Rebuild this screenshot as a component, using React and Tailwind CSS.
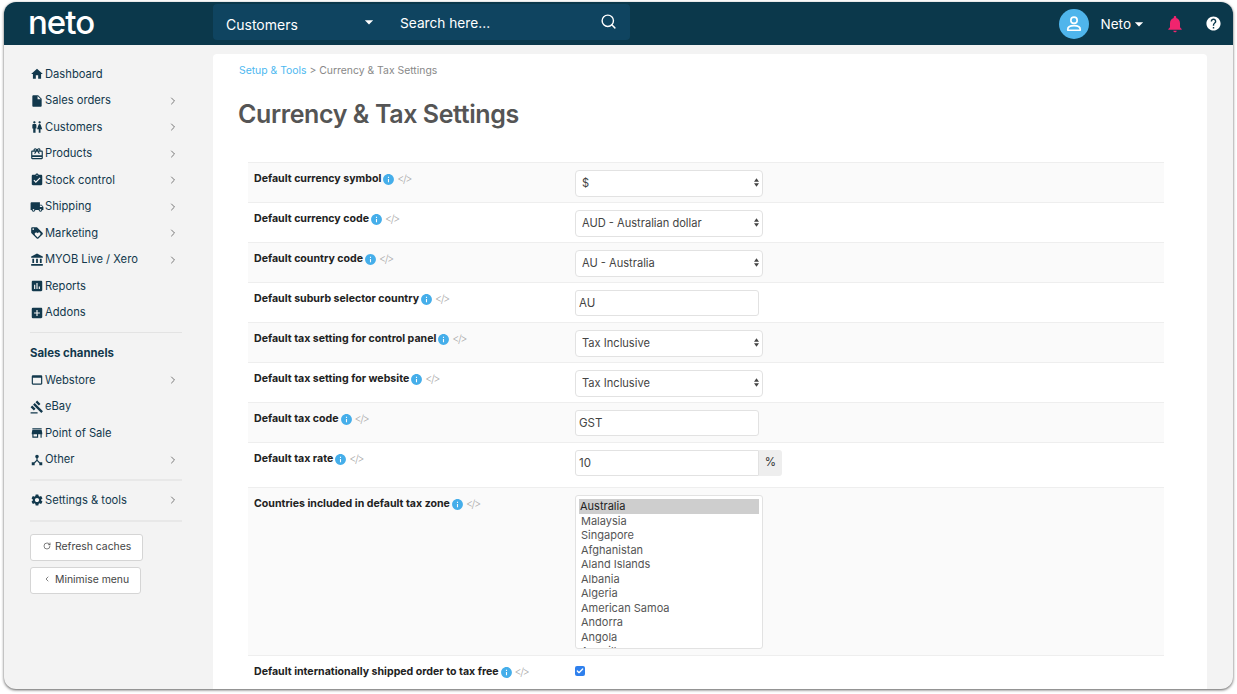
import {
  MdHome, MdInsertDriveFile, MdWc, MdCardGiftcard, MdAssignmentTurnedIn, MdLocalShipping,
  MdLoyalty, MdAccountBalance, MdAssessment, MdAddBox, MdWebAsset, MdGavel, MdStore,
  MdDeviceHub, MdSettings, MdNotifications, MdHelp, MdArrowDropDown, MdInfo,
} from "react-icons/md";
import { ChevronRight, ChevronLeft, RotateCw, Search, Check } from "lucide-react";

const mainMenu = [
  { label: "Dashboard", icon: MdHome },
  { label: "Sales orders", icon: MdInsertDriveFile, more: true },
  { label: "Customers", icon: MdWc, more: true },
  { label: "Products", icon: MdCardGiftcard, more: true },
  { label: "Stock control", icon: MdAssignmentTurnedIn, more: true },
  { label: "Shipping", icon: MdLocalShipping, more: true },
  { label: "Marketing", icon: MdLoyalty, more: true },
  { label: "MYOB Live / Xero", icon: MdAccountBalance, more: true },
  { label: "Reports", icon: MdAssessment },
  { label: "Addons", icon: MdAddBox },
];

const channels = [
  { label: "Webstore", icon: MdWebAsset, more: true },
  { label: "eBay", icon: MdGavel },
  { label: "Point of Sale", icon: MdStore },
  { label: "Other", icon: MdDeviceHub, more: true },
];

const countries = [
  "Malaysia", "Singapore", "Afghanistan", "Aland Islands", "Albania", "Algeria",
  "American Samoa", "Andorra", "Angola", "Anguilla",
];

function NavItem({ item }) {
  const Icon = item.icon;
  return (
    <div className="flex h-[26.5px] items-center text-[#12384c]">
      <Icon className="w-[14px] h-[14px] -ml-[0.5px] mr-[1.5px] shrink-0" />
      <span className="text-[11.2px]">{item.label}</span>
      {item.more && <ChevronRight className="ml-auto mr-[3px] w-[12px] h-[12px] text-[#777]" />}
    </div>
  );
}

function Label({ text }) {
  return (
    <div className="flex items-center text-[10.6px] font-bold text-[#222]">
      <span>{text}</span>
      <MdInfo className="ml-[1px] w-[13px] h-[13px] text-[#45aeea]" />
      <span className="ml-[2px] text-[11px] font-light tracking-[-1.5px] text-[#aaa]">&lt;/&gt;</span>
    </div>
  );
}

function Row({ text, shaded, className, children }) {
  return (
    <div className={`flex border-t border-[#eeeeee] ${shaded ? "bg-[#fafafa]" : "bg-white"} ${className}`}>
      <div className="w-[327px] pl-[6px] pt-[8px]">
        <Label text={text} />
      </div>
      <div className="pt-[6px]">{children}</div>
    </div>
  );
}

function SelectBox({ value }) {
  return (
    <div className="relative w-[188px] h-[27px]">
      <select
        defaultValue={value}
        className="appearance-none w-full h-full rounded-[4px] border border-[#e2e2e2] bg-white pl-[6px] text-[11.1px] text-[#444]"
      >
        <option>{value}</option>
      </select>
      <svg viewBox="0 0 6 10" className="absolute right-[4px] top-[9px] w-[5px] h-[9px] fill-[#444]">
        <path d="M3 0 6 4H0zM3 10 0 6h6z" />
      </svg>
    </div>
  );
}

function TextBox({ value }) {
  return (
    <input
      defaultValue={value}
      className="w-[184px] h-[26px] rounded-[3px] border border-[#e2e2e2] bg-white px-[3px] text-[11.5px] text-[#444]"
    />
  );
}

export default function App() {
  return (
    <div className="w-[1237px] h-[694px] overflow-hidden bg-white pl-[4px] pt-[2px] font-['Inter',sans-serif]">
      <div className="flex flex-col w-[1229px] h-[687px] overflow-hidden rounded-[12px] bg-[#f3f3f3] shadow-[0_1px_3px_rgba(0,0,0,0.65)]">
        <header className="flex items-center h-[43px] shrink-0 bg-[#0b384b] text-white">
          <div className="w-[209px] pl-[24px] text-[33px] font-medium leading-none tracking-[-1px] -mt-[3px]">neto</div>
          <div className="flex items-center w-[417px] h-[36px] -mt-[4px] rounded-[4px] bg-[#0f4460]">
            <span className="ml-[13px] w-[136px] mt-[5px] text-[14px]">Customers</span>
            <MdArrowDropDown className="w-[20px] h-[20px] -ml-[3px]" />
            <span className="ml-[21px] mt-[4px] text-[13.7px]">Search here...</span>
            <Search className="ml-auto mr-[13px] w-[17px] h-[17px]" />
          </div>
          <div className="ml-auto flex items-center">
            <div className="flex items-center justify-center w-[30px] h-[30px] rounded-full bg-[#4fb5ec]">
              <svg viewBox="0 0 24 24" className="w-[20px] h-[20px] fill-none stroke-white stroke-[2]">
                <circle cx="12" cy="7.5" r="3.8" />
                <path d="M4.5 19.5v-1c0-3 3.5-4.5 7.5-4.5s7.5 1.500 7.500 4.500v1z" strokeLinejoin="round" />
              </svg>
            </div>
            <span className="ml-[12px] mt-[1px] text-[13.5px]">Neto</span>
            <MdArrowDropDown className="w-[20px] h-[20px] -ml-[2px]" />
            <MdNotifications className="ml-[16px] w-[20px] h-[20px] text-[#f0246e]" />
            <MdHelp className="ml-[20px] mr-[11px] w-[17px] h-[17px]" />
          </div>
        </header>

        <div className="flex flex-1 min-h-0">
          <aside className="w-[209px] shrink-0 pl-[26px] pt-[16px]">
            <div className="w-[152px]">
              {mainMenu.map((item) => <NavItem key={item.label} item={item} />)}
              <div className="mt-[6px] border-t border-[#e3e3e3]" />
              <div className="mt-[12px] mb-[5px] text-[11.4px] font-bold text-[#12384c]">Sales channels</div>
              {channels.map((item) => <NavItem key={item.label} item={item} />)}
              <div className="mt-[6px] border-t-2 border-[#e8e8e8]" />
              <div className="my-[6px]">
                <NavItem item={{ label: "Settings & tools", icon: MdSettings, more: true }} />
              </div>
              <div className="border-t-2 border-[#e8e8e8]" />
            </div>
            <div className="mt-[12px] flex flex-col items-start gap-[6px]">
              <button className="flex items-center h-[27px] w-[113px] pl-[12px] rounded-[3px] border border-[#d5d5d5] bg-white text-[10.4px] text-[#444]">
                <RotateCw className="w-[8px] h-[8px] mr-[4px] -mt-[2px]" />
                Refresh caches
              </button>
              <button className="flex items-center h-[27px] w-[111px] pl-[12px] rounded-[3px] border border-[#d5d5d5] bg-white text-[10.4px] text-[#444]">
                <ChevronLeft className="w-[8px] h-[8px] mr-[4px] -mt-[2px]" />
                Minimise menu
              </button>
            </div>
          </aside>

          <main className="w-[994px] mt-[9px] rounded-t-[4px] bg-white pt-[10px] overflow-hidden">
            <div className="pl-[26px] text-[10.4px] leading-[14px] text-[#888]">
              <span className="text-[#4db8f0]">Setup &amp; Tools</span> &gt; Currency &amp; Tax Settings
            </div>
            <h1 className="pl-[25px] mt-[20px] text-[25px] leading-[32px] font-semibold text-[#555] tracking-[-0.4px]">
              Currency &amp; Tax Settings
            </h1>
            <div className="ml-[35px] mr-[43px] mt-[32px]">
              <Row text="Default currency symbol" shaded className="h-[40px]"><SelectBox value="$" /></Row>
              <Row text="Default currency code" className="h-[40px]"><SelectBox value="AUD - Australian dollar" /></Row>
              <Row text="Default country code" shaded className="h-[40px]"><SelectBox value="AU - Australia" /></Row>
              <Row text="Default suburb selector country" className="h-[40px]"><TextBox value="AU" /></Row>
              <Row text="Default tax setting for control panel" shaded className="h-[40px]"><SelectBox value="Tax Inclusive" /></Row>
              <Row text="Default tax setting for website" className="h-[40px]"><SelectBox value="Tax Inclusive" /></Row>
              <Row text="Default tax code" shaded className="h-[40px]"><TextBox value="GST" /></Row>
              <Row text="Default tax rate" className="h-[45px]">
                <div className="flex mt-[1px]">
                  <input
                    defaultValue="10"
                    className="w-[184px] h-[26px] rounded-l-[3px] border border-[#e2e2e2] bg-white px-[3px] text-[11.5px] text-[#444]"
                  />
                  <div className="flex items-center justify-center w-[23px] h-[26px] rounded-r-[3px] bg-[#eeeeee] text-[11.5px] text-[#333]">%</div>
                </div>
              </Row>
              <Row text="Countries included in default tax zone" shaded className="h-[168px]">
                <div className="w-[188px] h-[154px] mt-[1px] overflow-hidden rounded-[3px] border border-[#e2e2e2] bg-white pt-[3px] px-[3px] text-[11px] leading-[14.5px] text-[#555]">
                  <div className="bg-[#cecece] pl-[1px] text-[#222]">Australia</div>
                  {countries.map((c) => <div key={c} className="pl-[2px]">{c}</div>)}
                </div>
              </Row>
              <Row text="Default internationally shipped order to tax free" className="h-[40px]">
                <span className="flex items-center justify-center mt-[4px] w-[10px] h-[10px] rounded-[2px] bg-[#2f80ed] text-white">
                  <Check className="w-[8px] h-[8px]" strokeWidth={4} />
                </span>
              </Row>
            </div>
          </main>
        </div>
      </div>
    </div>
  );
}
